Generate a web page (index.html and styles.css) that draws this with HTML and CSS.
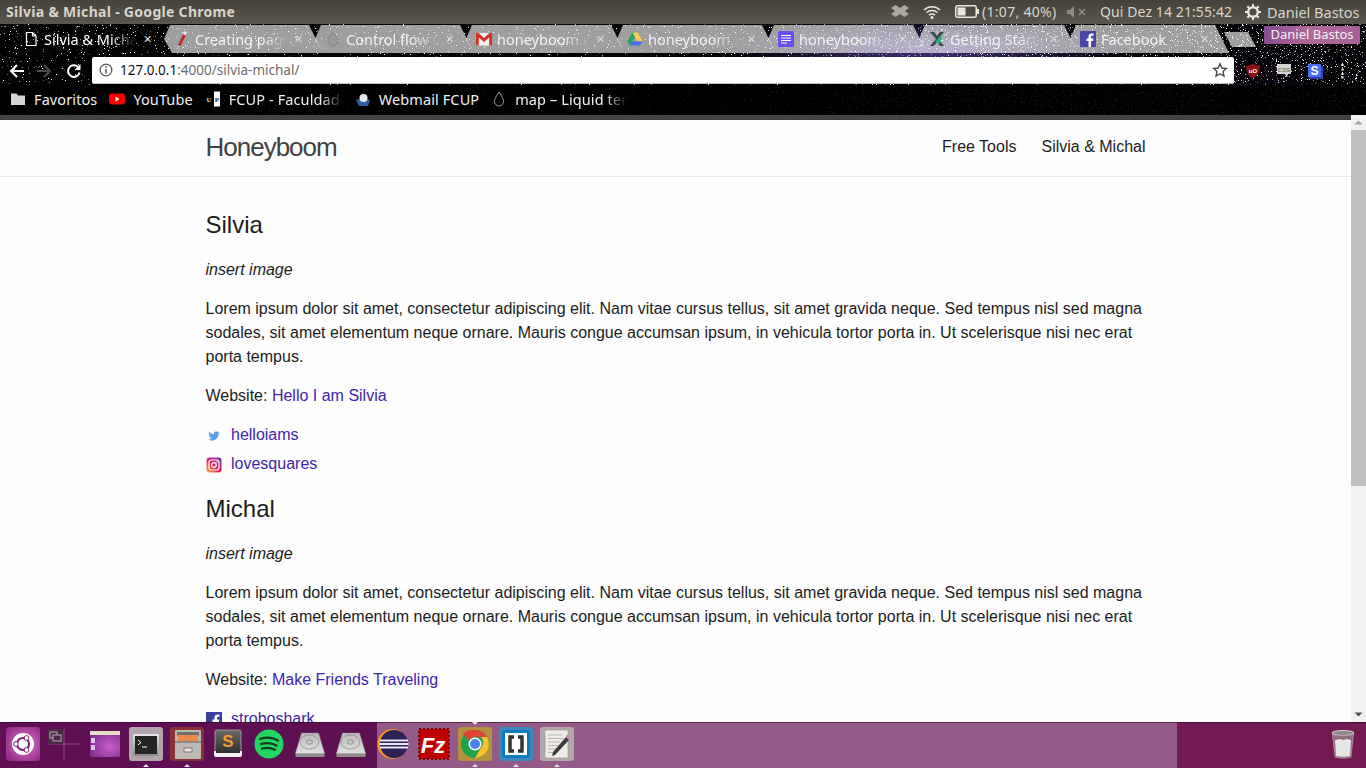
FILE: index.html
```html
<!DOCTYPE html>
<html lang="pt">
<head>
<meta charset="utf-8">
<title>Silvia &amp; Michal</title>
<link rel="stylesheet" href="styles.css">
</head>
<body>
<div class="panel">
  <div class="panel-title">Silvia &amp; Michal - Google Chrome</div>
  <div class="panel-right">
    <svg class="pi pi-drop" viewBox="0 0 18 16"><path d="M4.500 1 9 4 13.500 1 18 4l-4 3 4 3-4.500 3L9 10l-4.500 3L0 10l4-3-4-3z" fill="#aaa79f"/></svg>
    <svg class="pi pi-wifi" viewBox="0 0 18 14" fill="none" stroke="#e8e6df" stroke-width="1.500"><path d="M1 5a11.500 11.500 0 0 1 16 0M3.500 7.700a8 8 0 0 1 11 0M6 10.300a4.300 4.300 0 0 1 6 0"/><circle cx="9" cy="12.500" r=".8" fill="#e8e6df"/></svg>
    <svg class="pi pi-batt" viewBox="0 0 24 13"><rect x=".75" y=".75" width="20.500" height="11.500" rx="2" fill="none" stroke="#e8e6df" stroke-width="1.500"/><rect x="2.500" y="2.500" width="8" height="8" fill="#e8e6df"/><rect x="22" y="4" width="2" height="5" fill="#e8e6df"/></svg>
    <span class="pt pt-batt">(1:07, 40%)</span>
    <svg class="pi pi-mute" viewBox="0 0 20 12"><path d="M0 4h3l4-4v12L3 8H0z" fill="#8e8b83"/><path d="m12 3 6 6m0-6-6 6" stroke="#8e8b83" stroke-width="1.600"/></svg>
    <span class="pt pt-clock">Qui Dez 14 21:55:42</span>
    <svg class="pi pi-gear" viewBox="0 0 16 16"><circle cx="8" cy="8" r="4.800" fill="none" stroke="#e8e6df" stroke-width="2.400"/><path d="M8 0v3M8 13v3M0 8h3m10 0h3M2.300 2.300l2 2m7.400 7.400 2 2m0-11.400-2 2m-7.400 7.400-2 2" stroke="#e8e6df" stroke-width="2"/></svg>
    <span class="pt pt-user">Daniel Bastos</span>
  </div>
</div>

<div class="frame">
  <svg class="starfield" width="1366" height="91" aria-hidden="true">
    <defs>
      <filter id="stars" x="0" y="0" width="100%" height="100%" color-interpolation-filters="sRGB">
        <feTurbulence type="fractalNoise" baseFrequency=".85" numOctaves="2" seed="11"/>
        <feColorMatrix values="0 0 0 0 1  0 0 0 0 1  0 0 0 0 1  0 0 0 16 -11.300"/>
      </filter>
      <filter id="stars-dense" x="0" y="0" width="100%" height="100%" color-interpolation-filters="sRGB">
        <feTurbulence type="fractalNoise" baseFrequency=".8" numOctaves="2" seed="4"/>
        <feColorMatrix values="0 0 0 0 .93  0 0 0 0 .9  0 0 0 0 1  0 0 0 14 -9.500"/>
      </filter>
      <linearGradient id="dense-fade" x1="0" x2="1" y1="0" y2="0">
        <stop offset="0" stop-color="#000"/>
        <stop offset=".55" stop-color="#000"/>
        <stop offset=".68" stop-color="#fff"/>
        <stop offset="1" stop-color="#fff"/>
      </linearGradient>
      <mask id="dense-mask"><rect width="1366" height="91" fill="url(#dense-fade)"/></mask>
    </defs>
    <rect width="1366" height="91" filter="url(#stars)"/>
    <g mask="url(#dense-mask)"><rect width="1366" height="91" filter="url(#stars-dense)"/></g>
  </svg>
  <div class="tabstrip">
    <div class="tab tab-active">
      <svg class="fav" viewBox="0 0 16 16" fill="none" stroke="#fff" stroke-width="1.200"><path d="M3.500 1.500h6l3.500 3.500v9.500H3.500zM9.500 1.500V5H13"/></svg>
      <span class="tab-title">Silvia &amp; Michal</span><span class="tab-x">✕</span>
    </div>
    <div class="tab">
      <svg class="fav" viewBox="0 0 16 16"><path d="M10 1.500 12.500 3 6.500 15 4 14z" fill="#c8242c"/><path d="M10.200 0 13 1.500 11.500 4.500 9 3z" fill="#e8e8e8"/></svg>
      <span class="tab-title">Creating pages</span><span class="tab-x">✕</span>
    </div>
    <div class="tab">
      <svg class="fav" viewBox="0 0 16 16"><path d="M8 1c3 4 5 6.500 5 9a5 5 0 0 1-10 0c0-2.500 2-5 5-9z" fill="#9a989a" stroke="#858385"/></svg>
      <span class="tab-title">Control flow tags</span><span class="tab-x">✕</span>
    </div>
    <div class="tab">
      <svg class="fav" viewBox="0 0 16 16"><rect y="2" width="16" height="12.500" fill="#f2f2f2"/><path d="M0 2h2.500L8 7l5.500-5H16v12.500h-2.800V6.500L8 11 2.800 6.500v8H0z" fill="#d93025"/></svg>
      <span class="tab-title">honeyboom.xls</span><span class="tab-x">✕</span>
    </div>
    <div class="tab">
      <svg class="fav" viewBox="0 0 16 16"><path d="M5.500 1.500h5L5.200 10.500 2.600 6.500z" fill="#1fa463"/><path d="M10.500 1.500 15.500 10h-5L5.500 1.500z" fill="#ffd04b"/><path d="M5.200 10.500h10.300L13 14.500H2.700z" fill="#4c6ef5"/><path d="M.5 10 2.700 14.500 5.500 10l-3-3.500z" fill="#1fa463"/></svg>
      <span class="tab-title">honeyboom.xls</span><span class="tab-x">✕</span>
    </div>
    <div class="tab">
      <svg class="fav" viewBox="0 0 16 16"><rect width="16" height="16" rx="1.500" fill="#6a4df5"/><path d="M3 4.500h10M3 7h10M3 9.500h10M3 12h6" stroke="#fff"/></svg>
      <span class="tab-title">honeyboom.xls</span><span class="tab-x">✕</span>
    </div>
    <div class="tab">
      <svg class="fav" viewBox="0 0 16 16"><path d="M1 1h4l3 4 3-4h4L9 8l6 7h-4L8 11l-3 4H1l6-7z" fill="#3b4a52"/><path d="m6 10 8-6-3 9z" fill="#1fb57a"/></svg>
      <span class="tab-title">Getting Started</span><span class="tab-x">✕</span>
    </div>
    <div class="tab">
      <svg class="fav" viewBox="0 0 16 16"><rect width="16" height="16" rx="1" fill="#4b45a8"/><path d="M11 16V10h2l.4-2.500H11V6c0-.8.3-1.200 1.200-1.200h1.300V2.600C13 2.500 12.300 2.500 11.600 2.500 9.700 2.500 8.500 3.600 8.500 5.700v1.800H6.500V10h2v6z" fill="#fff"/></svg>
      <span class="tab-title">Facebook</span><span class="tab-x">✕</span>
    </div>
    <div class="newtab"></div>
    <div class="profile">Daniel Bastos</div>
  </div>

  <div class="toolbar">
    <svg class="nav-btn nav-back" viewBox="0 0 16 16" fill="none" stroke="#fff" stroke-width="2"><path d="M15 8H2M8 2 2 8l6 6"/></svg>
    <svg class="nav-btn nav-fwd" viewBox="0 0 16 16" fill="none" stroke="#4b4b4b" stroke-width="2"><path d="M1 8h13M8 2l6 6-6 6"/></svg>
    <svg class="nav-btn nav-reload" viewBox="0 0 16 16" fill="none" stroke="#fff" stroke-width="2"><path d="M13.500 9.500A5.800 5.800 0 1 1 12 4"/><path d="M14.500 1v6h-6z" fill="#fff" stroke="none"/></svg>
    <div class="omnibox">
      <svg class="omni-info" viewBox="0 0 14 14" fill="none" stroke="#5a5a5a" stroke-width="1.300"><circle cx="7" cy="7" r="5.800"/><path d="M7 6v4.500" stroke-width="1.600"/><path d="M7 3.200v1.600" stroke-width="1.600"/></svg>
      <span class="url"><span class="url-host">127.0.0.1</span>:4000/silvia-michal/</span>
      <svg class="omni-star" viewBox="0 0 16 16" fill="none" stroke="#4a4a4a" stroke-width="1.400"><path d="m8 1.800 1.900 4.200 4.500.5-3.400 3 1 4.500L8 11.700 4 14l1-4.500-3.400-3 4.500-.5z"/></svg>
    </div>
    <div class="ext-row">
      <svg class="ext" viewBox="0 0 16 16"><path d="M8 1 15 3c0 6-2 10-7 12C3 13 1 9 1 3z" fill="#8b0f14"/><text x="8" y="10" class="ext-ub">uO</text></svg>
      <svg class="ext" viewBox="0 0 16 16"><path d="M1 1h14v10h-3l-1.500 3L9 11H1z" fill="#d4d4d4"/><text x="8" y="8.500" class="ext-css">CSS</text></svg>
      <svg class="ext" viewBox="0 0 16 16"><path d="M3 3h13v13H3z" fill="#2a3fae"/><rect x="1" y="1" width="13" height="13" fill="#4a6cf5"/><text x="7.500" y="11.500" class="ext-s">S</text></svg>
    </div>
    <svg class="menu-dots" viewBox="0 0 3 16"><rect x=".5" y="1" width="2" height="2" fill="#fff"/><rect x=".5" y="5.500" width="2" height="2" fill="#fff"/><rect x=".5" y="10" width="2" height="2" fill="#fff"/><rect x=".5" y="13.500" width="2" height="2" fill="#fff"/></svg>
  </div>

  <div class="bookmarks">
    <div class="bm bm-first">
      <svg class="bm-ic" viewBox="0 0 16 16"><path d="M1 2.500h5.500L8 4.500h7v9.500H1z" fill="#d6d6d6"/></svg><span>Favoritos</span>
    </div>
    <div class="bm">
      <svg class="bm-ic" viewBox="0 0 16 16"><rect y="2.500" width="16" height="11" rx="3" fill="#f00"/><path d="m6.500 5.500 4 2.500-4 2.500z" fill="#fff"/></svg><span>YouTube</span>
    </div>
    <div class="bm">
      <svg class="bm-ic" viewBox="0 0 16 16"><rect x="9" y=".5" width="6" height="15" fill="#fff"/><text x="4" y="11" class="up-l">U</text><text x="12" y="11" class="up-r">P</text></svg><span class="bm-fade">FCUP - Faculdade</span>
    </div>
    <div class="bm">
      <svg class="bm-ic" viewBox="0 0 16 16"><path d="M1 9l7-2 7 2-2 6H4z" fill="#2f5da8"/><circle cx="8.500" cy="7" r="4" fill="#e4e8ee"/></svg><span>Webmail FCUP</span>
    </div>
    <div class="bm">
      <svg class="bm-ic" viewBox="0 0 16 16"><path d="M8 1c3 4.500 4.500 7 4.500 9.500a4.500 4.500 0 0 1-9 0C3.500 8 5 5.500 8 1z" fill="none" stroke="#9a9a9a"/></svg><span class="bm-fade bm-fade-map">map – Liquid template</span>
    </div>
  </div>
</div>

<div class="viewport">
  <div class="page">
    <header class="site-header">
      <div class="wrapper header-row">
        <a class="site-title">Honeyboom</a>
        <nav class="site-nav"><a>Free Tools</a><a>Silvia &amp; Michal</a></nav>
      </div>
    </header>
    <main class="wrapper content">
      <h2>Silvia</h2>
      <p><em>insert image</em></p>
      <p>Lorem ipsum dolor sit amet, consectetur adipiscing elit. Nam vitae cursus tellus, sit amet gravida neque. Sed tempus nisl sed magna sodales, sit amet elementum neque ornare. Mauris congue accumsan ipsum, in vehicula tortor porta in. Ut scelerisque nisi nec erat porta tempus.</p>
      <p>Website: <a class="link">Hello I am Silvia</a></p>
      <ul class="social">
        <li><svg class="soc" viewBox="0 0 24 24"><path d="M23.953 4.570a10 10 0 01-2.825.775 4.958 4.958 0 002.163-2.723c-.951.555-2.005.959-3.127 1.184a4.920 4.920 0 00-8.384 4.482C7.690 8.095 4.067 6.130 1.640 3.162a4.822 4.822 0 00-.666 2.475c0 1.710.870 3.213 2.188 4.096a4.904 4.904 0 01-2.228-.616v.060a4.923 4.923 0 003.946 4.827 4.996 4.996 0 01-2.212.085 4.936 4.936 0 004.604 3.417 9.867 9.867 0 01-6.102 2.105c-.390 0-.779-.023-1.170-.067a13.995 13.995 0 007.557 2.209c9.053 0 13.998-7.496 13.998-13.985 0-.210 0-.420-.015-.630A9.935 9.935 0 0024 4.590z" fill="#5f9bee" transform="translate(3.500 3.500) scale(.71)"/></svg><a class="link">helloiams</a></li>
        <li><svg class="soc" viewBox="0 0 16 16"><defs><linearGradient id="ig" x1="0" y1="1" x2="1" y2="0"><stop offset="0" stop-color="#fdb33a"/><stop offset=".45" stop-color="#e8265f"/><stop offset="1" stop-color="#6a2cc8"/></linearGradient></defs><rect x=".5" y=".5" width="15" height="15" rx="3" fill="url(#ig)"/><rect x="3" y="3" width="10" height="10" rx="2.500" fill="none" stroke="#fff" stroke-width="1.200"/><circle cx="8" cy="8" r="2.300" fill="none" stroke="#fff" stroke-width="1.200"/><circle cx="11" cy="5" r=".7" fill="#fff"/></svg><a class="link">lovesquares</a></li>
      </ul>
      <h2>Michal</h2>
      <p><em>insert image</em></p>
      <p>Lorem ipsum dolor sit amet, consectetur adipiscing elit. Nam vitae cursus tellus, sit amet gravida neque. Sed tempus nisl sed magna sodales, sit amet elementum neque ornare. Mauris congue accumsan ipsum, in vehicula tortor porta in. Ut scelerisque nisi nec erat porta tempus.</p>
      <p>Website: <a class="link">Make Friends Traveling</a></p>
      <ul class="social">
        <li><svg class="soc" viewBox="0 0 16 16"><rect width="16" height="16" fill="#3b3f9e"/><path d="M11 16V10h2l.4-2.500H11V6c0-.8.3-1.200 1.200-1.200h1.300V2.600C13 2.500 12.300 2.500 11.600 2.500 9.700 2.500 8.500 3.600 8.500 5.700v1.800H6.500V10h2v6z" fill="#fff"/></svg><a class="link">stroboshark</a></li>
      </ul>
    </main>
  </div>
  <div class="scrollbar">
    <svg class="sb-arrow" viewBox="0 0 15 15"><path d="M3.500 9.500 7.500 5.500l4 4z" fill="#a3a3a3"/></svg>
    <div class="sb-track"><div class="sb-thumb"></div></div>
    <svg class="sb-arrow" viewBox="0 0 15 15"><path d="M3.500 5.500h8l-4 4z" fill="#505050"/></svg>
  </div>
</div>

<footer class="launcher">
  <div class="launcher-seg seg-dark">
    <div class="slot"><div class="tile tile-ubuntu"><svg class="lic" viewBox="0 0 34 34"><circle cx="17" cy="17" r="11" fill="#fff"/><circle cx="17" cy="17" r="6" fill="#fff" stroke="#7a1f72" stroke-width="2"/><circle cx="10" cy="17" r="2.400" fill="#fff" stroke="#7a1f72"/><circle cx="20.500" cy="11" r="2.400" fill="#fff" stroke="#7a1f72"/><circle cx="20.500" cy="23" r="2.400" fill="#fff" stroke="#7a1f72"/></svg></div></div>
    <div class="slot"><div class="tile"><svg class="lic" viewBox="0 0 34 34"><path d="M17 2v32M2 17h32" stroke="#86557f" stroke-width="1"/><rect x="1" y="2" width="15" height="15" rx="1" fill="#4a2a45"/><rect x="3" y="5" width="7" height="6" fill="none" stroke="#b5aab3"/><rect x="6" y="8" width="8" height="6" fill="#4a2a45" stroke="#b5aab3"/></svg></div></div>
    <div class="slot"><div class="tile"><svg class="lic" viewBox="0 0 34 34"><defs><radialGradient id="un" cx=".65" cy=".6" r=".7"><stop offset="0" stop-color="#c75dc9"/><stop offset="1" stop-color="#7c2f8c"/></radialGradient></defs><rect x="2" y="4" width="30" height="26" rx="1" fill="url(#un)"/><rect x="2" y="4" width="30" height="4" fill="#e5dcc4"/><rect x="3" y="11" width="4" height="5" fill="#ddc6e6"/><rect x="3" y="18" width="4" height="5" fill="#ddc6e6"/></svg></div></div>
    <div class="slot"><div class="tile tile-active"><svg class="lic" viewBox="0 0 34 34"><defs><linearGradient id="tm" x1="0" y1="0" x2="0" y2="1"><stop offset="0" stop-color="#e8e8e8"/><stop offset="1" stop-color="#8a8a8a"/></linearGradient></defs><rect x="4" y="7" width="26" height="22" rx="1" fill="url(#tm)"/><rect x="6" y="9" width="22" height="18" fill="#242424"/><path d="m9 13 3 2.500L9 18" fill="none" stroke="#fff"/><path d="M13 20h5" stroke="#fff"/></svg><i class="pip"></i></div></div>
    <div class="slot"><div class="tile tile-files"><svg class="lic" viewBox="0 0 34 34"><rect x="5" y="3" width="26" height="29" rx="1" fill="#bdbab6"/><rect x="7" y="5" width="22" height="4" fill="#6e6e6e"/><rect x="8" y="8" width="20" height="6" fill="#e88a4a"/><rect x="5" y="14" width="26" height="2" fill="#8f8c88"/><rect x="14" y="21" width="8" height="4" fill="#e8e8e8" stroke="#777"/></svg><i class="pip"></i></div></div>
    <div class="slot"><div class="tile"><svg class="lic" viewBox="0 0 34 34"><defs><linearGradient id="sb" x1="0" y1="0" x2="0" y2="1"><stop offset="0" stop-color="#6a6a66"/><stop offset="1" stop-color="#2f2f2f"/></linearGradient></defs><rect x="4" y="3" width="26" height="23" rx="2" fill="url(#sb)" stroke="#b9b9b4" stroke-width=".7"/><path d="M3 24h28v4c0 1-1 2-2 2H5c-1 0-2-1-2-2z" fill="#f0f0f0"/><rect x="5" y="23" width="24" height="3" fill="#333"/><text x="17" y="20" class="lic-s">S</text></svg></div></div>
    <div class="slot"><div class="tile"><svg class="lic" viewBox="0 0 34 34"><circle cx="17" cy="17" r="14.500" fill="#1ed760"/><path d="M8 12c6-2 13-1.500 18 1.500M9 17c5-1.500 11-1 15.500 1.500M10 21.500c4.500-1 9-.8 13 1.300" fill="none" stroke="#1a3a24" stroke-width="2.300" stroke-linecap="round"/></svg></div></div>
    <div class="slot"><div class="tile"><svg class="lic" viewBox="0 0 34 34"><use href="#hdd"/></svg></div></div>
    <div class="slot"><div class="tile"><svg class="lic" viewBox="0 0 34 34"><defs><linearGradient id="hd" x1="0" y1="0" x2="0" y2="1"><stop offset="0" stop-color="#b9b9b7"/><stop offset="1" stop-color="#e2e2e0"/></linearGradient></defs><g id="hdd"><path d="M8.500 6h17l6 20v1H2.500v-1z" fill="url(#hd)" stroke="#8a8a88" stroke-width=".5"/><path d="M2.500 26.500h29V30h-29z" fill="#8c8c8a"/><ellipse cx="16.500" cy="15" rx="9.500" ry="7" fill="none" stroke="#9d9d9b"/><ellipse cx="16.500" cy="15" rx="3" ry="2.200" fill="none" stroke="#8d8d8b"/></g></svg></div></div>
  </div>
  <div class="launcher-seg seg-light">
    <div class="slot slot-shift"><div class="tile"><svg class="lic" viewBox="0 0 34 34"><circle cx="16.500" cy="17" r="15" fill="#f7941e"/><circle cx="18" cy="17" r="14" fill="#2c2255"/><path d="M4 13.500h28M3.500 17h29M4 20.500h28" stroke="#e8e6f5" stroke-width="1.800"/></svg></div></div>
    <div class="slot"><div class="tile"><svg class="lic" viewBox="0 0 34 34"><rect x="2" y="2" width="30" height="30" fill="#bf0000"/><path d="M2 2h30v30H2z" fill="none" stroke="#7d0000" stroke-width="2" stroke-dasharray="2 2"/><text x="16" y="26" class="lic-fz">Fz</text></svg></div></div>
    <div class="slot"><div class="tile tile-chrome"><svg class="lic" viewBox="0 0 34 34"><circle cx="17" cy="17" r="14" fill="#1fa34a"/><path d="M17 3a14 14 0 0 1 12.100 7H17a7 7 0 0 0-6.100 3.500L5 6.900A14 14 0 0 1 17 3z" fill="#db4437"/><path d="M29.100 10A14 14 0 0 1 17 31l6-10.500A7 7 0 0 0 23 10z" fill="#fbc02d"/><circle cx="17" cy="17" r="6.500" fill="#fff"/><circle cx="17" cy="17" r="5" fill="#4a80e8"/></svg><i class="pip"></i><i class="pip pip-top"></i></div></div>
    <div class="slot"><div class="tile tile-brackets"><svg class="lic" viewBox="0 0 34 34"><rect x="3" y="3" width="28" height="28" rx="3" fill="#0f7ac0"/><rect x="6" y="6" width="22" height="22" fill="#fff"/><path d="M15 10h-4v14h4M19 10h4v14h-4" fill="none" stroke="#333" stroke-width="3.500"/></svg><i class="pip"></i></div></div>
    <div class="slot"><div class="tile tile-notes"><svg class="lic" viewBox="0 0 34 34"><rect x="5" y="3" width="23" height="28" fill="#eeece6" stroke="#9a9890" stroke-width=".7"/><path d="M8 8h14M8 11.500h16M8 15h12M8 18.500h10M8 22h8M8 25.500h6" stroke="#b9b7af"/><path d="M13 25 26 10l3 3-14 15-3 1z" fill="#3c3c3c"/><path d="m25.500 9.500 2-2 3 3-2 2z" fill="#d77fb6"/></svg><i class="pip"></i></div></div>
  </div>
  <div class="launcher-seg seg-end">
    <svg class="trash" viewBox="0 0 26 30"><ellipse cx="13" cy="4" rx="11" ry="2.500" fill="#8f8a8c" stroke="#d5d5d5"/><path d="M2.500 5 5 28c3 1.500 13 1.500 16 0L23.500 5c-3 2-18 2-21 0z" fill="#8d6d80" stroke="#b8a9b2" stroke-width=".7"/><path d="M5 11l5-1 3 1 4-1 4 1-1 16c-3 1-11 1-14 0z" fill="#e6e6e6"/></svg>
  </div>
</footer>
</body>
</html>
```

FILE: styles.css
```css
* { box-sizing: border-box; }
html, body { margin: 0; padding: 0; height: 100%; }
body {
  width: 1366px;
  height: 768px;
  display: flex;
  flex-direction: column;
  overflow: hidden;
  font-family: "Liberation Sans", Arial, sans-serif;
  background: #fdfdfd;
}

/* Ubuntu top panel */
.panel {
  flex: 0 0 24px;
  display: flex;
  align-items: center;
  justify-content: space-between;
  padding-bottom: 1px;
  background: linear-gradient(#45423b, #5a574e);
  font-family: "Noto Sans", sans-serif;
  color: #dfdbd2;
  font-size: 14px;
}
.panel-title { padding-left: 6px; font-weight: 700; letter-spacing: .3px; color: #d8d4ca; }
.panel-right { display: flex; align-items: center; padding-right: 5px; }
.pi { display: block; flex: none; }
.pi-drop { width: 18px; height: 16px; }
.pi-wifi { width: 18px; height: 14px; margin-left: 14px; }
.pi-batt { width: 24px; height: 13px; margin-left: 14px; }
.pt { white-space: nowrap; color: #d9d5cb; }
.pt-batt { margin-left: 3px; width: 74px; letter-spacing: .3px; }
.pi-mute { width: 20px; height: 12px; margin-left: 11px; }
.pt-clock { margin-left: 13px; width: 132px; letter-spacing: .1px; }
.pi-gear { width: 16px; height: 16px; margin-left: 13px; }
.pt-user { margin-left: 6px; width: 94px; font-size: 14.500px; }

/* Chrome frame with a starfield theme */
.frame {
  position: relative;
  flex: 0 0 91px;
  background-color: #030104;
  background-image:
    radial-gradient(ellipse 200px 32px at 930px 26px, rgba(120, 90, 220, .55), transparent),
    radial-gradient(ellipse 200px 50px at 1160px 80px, rgba(70, 30, 90, .25), transparent);
}
.starfield { position: absolute; left: 0; top: 0; display: block; }
.tabstrip, .toolbar, .bookmarks { position: relative; }
.tabstrip {
  height: 31px;
  display: flex;
  align-items: flex-start;
  padding: 1px 0 0 6px;
}
.tab {
  flex: 0 0 166px;
  height: 28px;
  margin-right: -15px;
  padding: 0 0 1px 17px;
  display: flex;
  align-items: center;
  background: rgba(255, 255, 255, .62);
  clip-path: polygon(13px 0, 152px 0, 166px 100%, 15px 100%, 7px 50%);
  color: #f4f2f6;
  font-family: "Noto Sans", sans-serif;
  font-size: 14.500px;
  white-space: nowrap;
}
.tab-active { background: transparent; color: #fff; }
.fav { width: 16px; height: 16px; flex: none; }
.tab-title {
  margin-left: 5px;
  width: 92px;
  overflow: hidden;
  -webkit-mask-image: linear-gradient(90deg, #000 72%, transparent);
  mask-image: linear-gradient(90deg, #000 72%, transparent);
}
.tab-x { margin-left: 7px; width: 12px; font-size: 11px; color: #dcdadf; line-height: 1; }
.newtab {
  flex: none;
  width: 32px;
  height: 15px;
  margin: 7px 0 0 10px;
  background: rgba(255, 255, 255, .62);
  clip-path: polygon(0 0, 24px 0, 100% 100%, 8px 100%);
}
.profile {
  flex: none;
  margin: 1px 6px 0 auto;
  width: 96px;
  height: 18px;
  border-radius: 1px;
  background: linear-gradient(90deg, #8a4d90, #b06a9c 50%, #a55f98);
  color: #f2f2f2;
  font: 13px/17px "Noto Sans", sans-serif;
  text-align: center;
  white-space: nowrap;
}

.toolbar {
  height: 30px;
  display: flex;
  align-items: center;
  padding: 1px 0 0 9px;
}
.nav-btn { width: 16px; height: 16px; flex: none; }
.nav-fwd { margin-left: 11px; }
.nav-reload { margin-left: 14px; }
.omnibox {
  flex: 0 0 1142px;
  height: 27px;
  margin-left: 10px;
  display: flex;
  align-items: center;
  padding: 0 6px 0 7px;
  background: #fff;
  border-radius: 2px;
  border-bottom: 1px solid #bdbdbd;
  font-family: "Noto Sans", sans-serif;
  font-size: 13.500px;
  color: #6c6c6c;
}
.omni-info { width: 14px; height: 14px; flex: none; }
.url { margin-left: 7px; flex: 1; white-space: nowrap; }
.url-host { color: #111; }
.omni-star { width: 16px; height: 16px; flex: none; }
.ext-row { display: flex; gap: 15px; margin-left: 11px; }
.ext { width: 16px; height: 16px; display: block; }
.ext-ub { font: 700 6px "Liberation Sans", sans-serif; fill: #fff; text-anchor: middle; }
.ext-css { font: 700 6px "Liberation Sans", sans-serif; fill: #777; text-anchor: middle; }
.ext-s { font: 700 12px "Liberation Sans", sans-serif; fill: #fff; text-anchor: middle; }
.menu-dots { width: 3px; height: 16px; margin-left: 18px; flex: none; }

.bookmarks {
  height: 30px;
  display: flex;
  align-items: center;
  padding-bottom: 2px;
  background: rgba(0, 0, 0, .9);
  color: #f0f0f0;
  font-family: "Noto Sans", sans-serif;
  font-size: 14.500px;
  letter-spacing: .1px;
  white-space: nowrap;
}
.bm { display: flex; align-items: center; flex: none; margin-left: 12px; }
.bm-first { margin-left: 10px; }
.bm-ic { width: 16px; height: 16px; flex: none; margin-right: 8px; }
.bm-fade {
  width: 114px;
  overflow: hidden;
  -webkit-mask-image: linear-gradient(90deg, #000 80%, transparent);
  mask-image: linear-gradient(90deg, #000 80%, transparent);
}
.bm-fade-map { width: 112px; }
.up-l { font: 700 7px "Liberation Serif", serif; fill: #ddd; text-anchor: middle; }
.up-r { font: 700 7px "Liberation Serif", serif; fill: #222; text-anchor: middle; }

/* Page */
.viewport { flex: 1 1 auto; min-height: 0; display: flex; overflow: hidden; }
.page { flex: 1 1 auto; min-width: 0; background: #fdfdfd; color: #1c1c1c; font-size: 16px; line-height: 24px; }
.wrapper { width: 940px; margin: 0 auto; }
.site-header { height: 62px; border-top: 5px solid #424242; border-bottom: 1px solid #e8e8e8; }
.header-row { display: flex; justify-content: space-between; }
.site-title { font-size: 26px; line-height: 54px; letter-spacing: -1px; color: #424242; font-weight: 300; }
.site-nav { line-height: 54px; color: #1c1c1c; }
.site-nav a { margin-left: 25px; }
.content { padding-top: 30px; }
h2 { font-size: 24px; font-weight: 400; line-height: 36px; margin: 0 0 15px; }
p { margin: 0 0 15px; }
.link { color: #3f25ab; }
.social { list-style: none; margin: 0 0 15px; padding: 0; }
.social li { display: flex; align-items: center; height: 24px; margin-bottom: 5px; }
.social li:last-child { margin-bottom: 0; }
.soc { width: 16px; height: 16px; flex: none; margin-right: 9.500px; position: relative; top: 1px; }

.scrollbar { flex: 0 0 15px; display: flex; flex-direction: column; background: #f1f1f1; }
.sb-arrow { width: 15px; height: 15px; flex: none; display: block; }
.sb-track { flex: 1; min-height: 0; }
.sb-thumb { height: 356px; background: #c1c1c1; }

/* Unity launcher */
.launcher { flex: 0 0 46px; display: flex; position: relative; }
.launcher-seg { display: flex; align-items: flex-start; padding-top: 5px; height: 46px; box-shadow: inset 0 1px 0 rgba(40, 0, 30, .55); }
.seg-dark { flex: 0 0 377px; padding-left: 2px; background: #5f1053; }
.seg-light { flex: 0 0 800px; background: #955b88; }
.seg-end { flex: 1; justify-content: flex-end; padding-right: 10px; background: #731a52; }
.slot { flex: 0 0 41px; display: flex; justify-content: center; }
.slot-shift { margin-left: -5px; }
.tile { position: relative; width: 34px; height: 34px; border-radius: 3px; }
.tile-ubuntu { background: radial-gradient(circle at 55% 50%, #d59ccd, #b252a6 45%, #8a1a7e); }
.tile-active { background: #b0a4ad; }
.tile-files { background: #8a3038; }
.tile-chrome { background: #b5903f; }
.tile-brackets { background: #3d8ab8; }
.tile-notes { background: #b5a6ae; }
.lic { display: block; width: 34px; height: 34px; }
.lic-s { font: 700 17px "Liberation Sans", sans-serif; fill: #f29b2c; text-anchor: middle; }
.lic-fz { font: italic 700 22px "Liberation Sans", sans-serif; fill: #fff; text-anchor: middle; }
.pip {
  position: absolute;
  left: 14px;
  bottom: -6px;
  width: 0;
  height: 0;
  border: 3px solid transparent;
  border-top: 0;
  border-bottom: 3px solid #e6e0e4;
}
.pip-top {
  bottom: auto;
  top: -5px;
  border-top: 3px solid #e6e0e4;
  border-bottom: 0;
}
.trash { width: 26px; height: 30px; display: block; margin-top: 2px; }
```
